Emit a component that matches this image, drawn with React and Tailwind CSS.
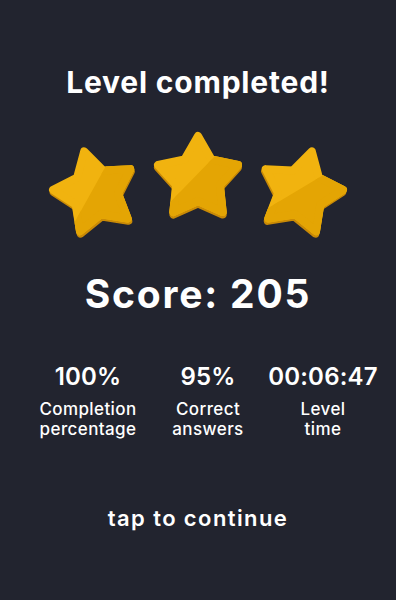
import React from "react";

const STAR =
  "M50 10 L63.52 33.39 L89.95 39.02 L71.88 59.11 L74.69 85.98 L50 75 L25.31 85.98 L28.12 59.11 L10.05 39.02 L36.48 33.39 Z";

function Star({ rotate = 0, id, className = "" }) {
  return (
    <svg width="100" height="100" viewBox="0 0 100 100" className={className}>
      <defs>
        <clipPath id={id}>
          <polygon points="107,-11.2 130,-11.2 130,130 -30,130" />
        </clipPath>
      </defs>
      <g transform={`rotate(${rotate} 50 52)`}>
        <path
          d={STAR}
          transform="translate(0 2.5)"
          fill="#c98a06"
          stroke="#c98a06"
          strokeWidth="8"
          strokeLinejoin="round"
        />
        <path d={STAR} fill="#f1b30f" stroke="#f1b30f" strokeWidth="8" strokeLinejoin="round" />
        <g clipPath={`url(#${id})`}>
          <path d={STAR} fill="#e4a504" stroke="#e4a504" strokeWidth="8" strokeLinejoin="round" />
        </g>
      </g>
    </svg>
  );
}

function Stat({ value, line1, line2, width }) {
  return (
    <div className={`flex flex-col items-center ${width}`}>
      <div className="text-[24px] leading-[28px] font-semibold tracking-[0.2px]">{value}</div>
      <div className="mt-[8px] text-[17px] leading-[20px] font-medium text-center tracking-[0.4px]">
        <div>{line1}</div>
        <div>{line2}</div>
      </div>
    </div>
  );
}

export default function App() {
  return (
    <div
      className="w-[396px] h-[600px] bg-[#22242f] text-white flex flex-col items-center overflow-hidden"
      style={{ fontFamily: "Inter, 'Noto Sans', sans-serif" }}
    >
      <h1 className="pt-[64px] text-[30px] leading-[36px] font-bold tracking-[0.8px]">Level completed!</h1>
      <div className="mt-[26px] flex items-start justify-center gap-[3px]">
        <Star id="s1" rotate={-15} className="mt-[14px]" />
        <Star id="s2" rotate={0} />
        <Star id="s3" rotate={15} className="mt-[14px]" />
      </div>
      <div className="mt-[34px] text-[39px] leading-[40px] font-bold tracking-[1.8px]">Score: 205</div>
      <div className="mt-[49px] self-stretch flex pl-[28px]">
        <Stat value="100%" line1="Completion" line2="percentage" width="w-[120px]" />
        <Stat value="95%" line1="Correct" line2="answers" width="w-[120px]" />
        <Stat value="00:06:47" line1="Level" line2="time" width="w-[110px]" />
      </div>
      <div className="mt-[65px] text-[22px] leading-[28px] font-semibold tracking-[1.4px]">tap to continue</div>
    </div>
  );
}
